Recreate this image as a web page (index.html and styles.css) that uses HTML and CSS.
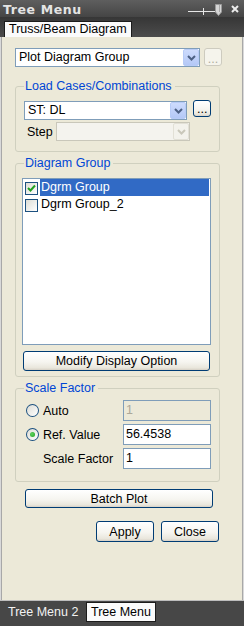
FILE: index.html
```html
<!DOCTYPE html>
<html lang="en">
<head>
    <meta charset="UTF-8">
    <meta name="viewport" content="width=device-width, initial-scale=1.0">
    <title>Tree Menu</title>
    <link rel="stylesheet" href="styles.css">
</head>
<body>
    <div class="titlebar">
        <span class="title">Tree Menu</span>
        <svg class="title-icons" width="56" height="17" viewBox="0 0 56 17">
            <line x1="0" y1="11.5" x2="27" y2="11.5" stroke="#e6e6e6" stroke-width="1"/>
            <line x1="15.5" y1="8" x2="15.5" y2="15" stroke="#e6e6e6" stroke-width="1"/>
            <polygon points="27.5,4.5 33.5,4.5 33.5,12 30.5,15.5 27.5,12" fill="#d6d6d6" stroke="#9a9a9a" stroke-width="1"/>
            <line x1="31.5" y1="5" x2="31.5" y2="12" stroke="#a8a8a8" stroke-width="1"/>
            <path d="M44 6 L50 12 M50 6 L44 12" stroke="#ececec" stroke-width="2"/>
        </svg>
    </div>

    <div class="tabstrip">
        <div class="tab">Truss/Beam Diagram</div>
    </div>

    <div class="panel">
        <div class="top-row">
            <div class="combo plot">
                <span class="combo-text">Plot Diagram Group</span>
                <span class="arrow">
                    <svg width="9" height="6" viewBox="0 0 9 6"><polyline points="1,1 4.5,4.5 8,1" fill="none" stroke="#4d6185" stroke-width="2"/></svg>
                </span>
            </div>
            <button class="dots off">...</button>
        </div>

        <fieldset class="group load">
            <legend>Load Cases/Combinations</legend>
            <div class="load-row">
                <div class="combo case">
                    <span class="combo-text">ST: DL</span>
                    <span class="arrow">
                        <svg width="9" height="6" viewBox="0 0 9 6"><polyline points="1,1 4.5,4.5 8,1" fill="none" stroke="#4d6185" stroke-width="2"/></svg>
                    </span>
                </div>
                <button class="btn dots">...</button>
            </div>
            <div class="step-row">
                <span class="step-label">Step</span>
                <div class="combo step off">
                    <span class="combo-text"></span>
                    <span class="arrow">
                        <svg width="9" height="6" viewBox="0 0 9 6"><polyline points="1,1 4.5,4.5 8,1" fill="none" stroke="#c9c7ba" stroke-width="2"/></svg>
                    </span>
                </div>
            </div>
        </fieldset>

        <fieldset class="group diagram">
            <legend>Diagram Group</legend>
            <div class="listbox">
                <div class="item">
                    <span class="check">
                        <svg width="11" height="11" viewBox="0 0 11 11"><polyline points="2,5 4.5,7.5 9,2.5" fill="none" stroke="#21a121" stroke-width="2"/></svg>
                    </span>
                    <span class="item-text selected">Dgrm Group</span>
                </div>
                <div class="item">
                    <span class="check"></span>
                    <span class="item-text">Dgrm Group_2</span>
                </div>
            </div>
            <button class="btn modify">Modify Display Option</button>
        </fieldset>

        <fieldset class="group scale">
            <legend>Scale Factor</legend>
            <div class="scale-row">
                <span class="radio"></span>
                <span class="scale-label">Auto</span>
                <span class="textbox off">1</span>
            </div>
            <div class="scale-row">
                <span class="radio on"></span>
                <span class="scale-label">Ref. Value</span>
                <span class="textbox">56.4538</span>
            </div>
            <div class="scale-row">
                <span class="scale-label indent">Scale Factor</span>
                <span class="textbox">1</span>
            </div>
        </fieldset>

        <button class="btn batch">Batch Plot</button>

        <div class="actions">
            <button class="btn action">Apply</button>
            <button class="btn action">Close</button>
        </div>
    </div>

    <div class="bottombar">
        <span class="bottom-label">Tree Menu 2</span>
        <span class="bottom-tab">Tree Menu</span>
    </div>
</body>
</html>
```

FILE: styles.css
```css
body {
    margin: 0;
    width: 244px;
    height: 626px;
    overflow: hidden;
    background: #d9d9d9;
    font-family: "Liberation Sans", Arial, sans-serif;
    font-size: 12.5px;
    color: #000;
}
.titlebar {
    height: 17px;
    box-sizing: border-box;
    padding: 2px 0 0 3px;
    display: flex;
    background: linear-gradient(#5e5e5e, #454545);
}
.title {
    font-family: "DejaVu Sans", sans-serif;
    font-weight: bold;
    font-size: 12.5px;
    line-height: 15px;
    color: #e4e4e4;
    letter-spacing: 0.6px;
}
.title-icons {
    margin: -2px 0 0 auto;
}
.tabstrip {
    height: 20px;
    box-sizing: border-box;
    padding-left: 4px;
    display: flex;
    align-items: flex-end;
    background: linear-gradient(#363636, #4c4c4c);
}
.tab {
    height: 16px;
    box-sizing: border-box;
    padding: 0 4px;
    line-height: 15px;
    background: #fbfbfb;
    border: 1px solid #1c1c1c;
    border-bottom: none;
}
.panel {
    height: 563px;
    box-sizing: border-box;
    margin: 0 1px;
    padding: 11px 0 0 13px;
    background: #ece9d8;
    border-left: 1px solid #a8a8a8;
    border-right: 1px solid #a8a8a8;
}

/* combo boxes */
.top-row {
    display: flex;
    gap: 4px;
}
.combo {
    height: 19px;
    box-sizing: border-box;
    display: flex;
    background: #fff;
    border: 1px solid #7f9db9;
}
.combo-text {
    flex: 1;
    padding-left: 3px;
    line-height: 17px;
    white-space: nowrap;
}
.arrow {
    width: 16px;
    box-sizing: border-box;
    display: flex;
    align-items: center;
    justify-content: center;
    background: linear-gradient(#cddbfd, #b4c8f6);
    border: 1px solid #b7cbf7;
    border-radius: 2px;
}
.combo.plot {
    width: 185px;
}
.combo.case {
    width: 167px;
}
.combo.step {
    width: 134px;
}
.combo.off {
    background: #f4f3ee;
    border-color: #c9c7ba;
}
.combo.off .arrow {
    background: #f3f2ec;
    border-color: #e2e0d6;
}

/* buttons */
button {
    font-family: "Liberation Sans", Arial, sans-serif;
    font-size: 12.5px;
    color: #000;
    padding: 0;
    margin: 0;
}
.btn {
    box-sizing: border-box;
    border: 1px solid #003c74;
    border-radius: 3px;
    background: linear-gradient(#ffffff 0%, #f6f5f0 55%, #e9e6dc 88%, #d6d0c5 100%);
}
.dots {
    width: 18px;
    height: 18px;
    line-height: 20px;
    overflow: hidden;
}
.dots.off {
    border: 1px solid #cdcbbf;
    border-radius: 3px;
    background: #f5f4ec;
    color: #b0ad9d;
}
.modify {
    display: block;
    width: 187px;
    height: 20px;
    margin: 6px 0 0 1px;
}
.batch {
    display: block;
    width: 188px;
    height: 19px;
    margin: 7px 0 0 10px;
}
.actions {
    display: flex;
    gap: 7px;
    margin: 13px 0 0 81px;
}
.action {
    width: 58px;
    height: 21px;
}

/* group boxes */
.group {
    width: 205px;
    box-sizing: border-box;
    margin: 4px 0 0 0;
    padding: 7px 8px 10px 8px;
    border: 1px solid #d0d0bf;
    border-radius: 3px;
    min-inline-size: 0;
}
.group legend {
    padding: 0 3px 0 1px;
    line-height: 15px;
    color: #0046d5;
}
.group.load {
    margin-top: 12px;
}
.load-row {
    display: flex;
    gap: 6px;
}
.load-row .dots {
    margin-top: -1px;
    height: 17px;
    line-height: 17px;
}
.step-row {
    display: flex;
    align-items: center;
    margin-top: 2px;
}
.step-label {
    width: 32px;
    box-sizing: border-box;
    padding-left: 3px;
}

.group.diagram {
    padding: 7px 8px 5px 6px;
}
.group.diagram legend {
    margin-left: 2px;
}
.listbox {
    height: 167px;
    box-sizing: border-box;
    background: #fff;
    border: 1px solid #7f9db9;
}
.item {
    height: 17px;
    display: flex;
    padding-left: 2px;
}
.check {
    width: 13px;
    height: 13px;
    box-sizing: border-box;
    margin-top: 3px;
    display: flex;
    align-items: center;
    justify-content: center;
    border: 1px solid #1c5180;
    background: linear-gradient(135deg, #dcdcd5, #ffffff);
}
.item-text {
    flex: 1;
    margin: 0 1px 0 2px;
    padding-left: 1px;
    line-height: 17px;
    white-space: nowrap;
}
.item-text.selected {
    background: #316ac5;
    color: #fff;
}

.group.scale {
    padding: 4px 8px 12px 8px;
}
.scale-row {
    display: flex;
    align-items: center;
    margin-bottom: 3px;
}
.scale-row:last-child {
    margin-bottom: 0;
}
.radio {
    width: 13px;
    height: 13px;
    box-sizing: border-box;
    margin: 0 4px 0 2px;
    display: flex;
    align-items: center;
    justify-content: center;
    border: 1px solid #1c5180;
    border-radius: 50%;
    background: linear-gradient(135deg, #dcdcd5, #ffffff);
}
.radio.on::after {
    content: "";
    width: 5px;
    height: 5px;
    border-radius: 50%;
    background: radial-gradient(circle at 40% 40%, #5fd35f, #21a121);
}
.scale-label {
    width: 81px;
}
.scale-label.indent {
    margin-left: 19px;
}
.textbox {
    width: 89px;
    height: 21px;
    box-sizing: border-box;
    padding-left: 2px;
    line-height: 19px;
    background: #fff;
    border: 1px solid #7f9db9;
}
.textbox.off {
    background: #ece9d8;
    color: #aca899;
}

/* bottom tabs */
.bottombar {
    height: 26px;
    box-sizing: border-box;
    display: flex;
    align-items: flex-start;
    padding: 1px 0 0 8px;
    background: #474747;
    border-top: 1px solid #bdbdbd;
}
.bottom-label {
    width: 78px;
    line-height: 20px;
    color: #f2f2f2;
}
.bottom-tab {
    height: 20px;
    box-sizing: border-box;
    padding: 0 4px;
    line-height: 18px;
    background: #fbfbfb;
    border: 1px solid #1c1c1c;
}
```
